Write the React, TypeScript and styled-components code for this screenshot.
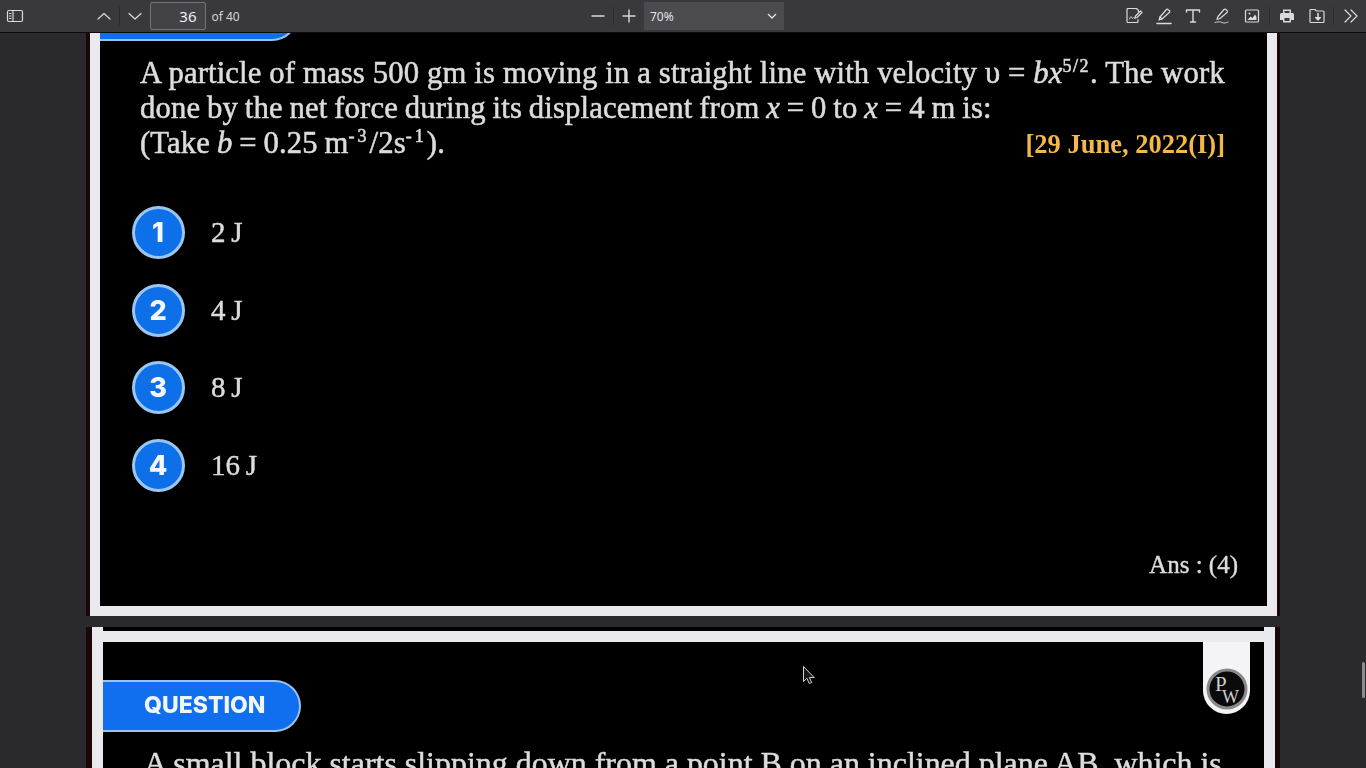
import type { ReactNode } from 'react';
import styled, { createGlobalStyle } from 'styled-components';

const OPTIONS = ['2 J', '4 J', '8 J', '16 J'];

const GlobalStyle = createGlobalStyle`
  html, body {
    margin: 0;
    height: 100%;
    overflow: hidden;
    background: #2a2a2e;
    font-family: 'Noto Sans', sans-serif;
  }
`;

const Wrapper = styled.div`
  position: relative;
  width: 1366px;
  height: 768px;
  overflow: hidden;
  display: flex;
  flex-direction: column;
`;

const Toolbar = styled.header`
  flex: none;
  height: 32px;
  background: #38383d;
  border-bottom: 1px solid #0c0c0d;
  display: flex;
  align-items: center;
  color: #d8d8da;
`;

const ToolGroup = styled.div<{ $width?: number }>`
  width: ${(p) => (p.$width ? `${p.$width}px` : 'auto')};
  flex: none;
  height: 100%;
  display: flex;
  align-items: center;
`;

const Spacer = styled.div`
  flex: 1;
`;

const IconSlot = styled.span<{ $width?: number }>`
  width: ${(p) => p.$width ?? 30}px;
  flex: none;
  height: 100%;
  display: flex;
  align-items: center;
  justify-content: center;
`;

const Separator = styled.span<{ $side?: number }>`
  flex: none;
  width: 1px;
  height: 18px;
  margin: 0 ${(p) => p.$side ?? 0}px;
  background: #2a2a2e;
`;

const PageInput = styled.div`
  box-sizing: border-box;
  width: 56px;
  height: 28px;
  padding-right: 8px;
  border: 1px solid #737378;
  border-radius: 2px;
  background: #424247;
  font-size: 15px;
  line-height: 26px;
  text-align: right;
  color: #f0f0f2;
`;

const PageCount = styled.span`
  margin-left: 6px;
  font-size: 12px;
  color: #d4d4d6;
`;

const ZoomSelect = styled.div`
  box-sizing: border-box;
  width: 140px;
  height: 28px;
  padding: 0 6px;
  background: #4a4a4f;
  display: flex;
  align-items: center;
  justify-content: space-between;
  font-size: 12px;
  color: #e4e4e6;
`;

const Viewer = styled.main`
  flex: 1;
  min-height: 0;
  overflow: hidden;
  display: flex;
  flex-direction: column;
  align-items: center;
  gap: 11px;
`;

const Page = styled.section<{ $left: number; $right: number; $height: number }>`
  flex: none;
  box-sizing: border-box;
  width: 1194px;
  height: ${(p) => p.$height}px;
  padding: 0 ${(p) => p.$right}px 0 ${(p) => p.$left}px;
  background: #1a0707;
`;

const Frame = styled.div<{ $side: number; $bottom: number }>`
  box-sizing: border-box;
  height: 100%;
  padding: 0 ${(p) => p.$side}px ${(p) => p.$bottom}px;
  background: #e9e9ee;
  display: flex;
  flex-direction: column;
`;

const TopGap = styled.div`
  flex: none;
  height: 4px;
  background: #000;
`;

const Panel = styled.div<{ $band?: boolean }>`
  position: relative;
  flex: 1;
  min-height: 0;
  overflow: hidden;
  background: #000;
  border-top: ${(p) => (p.$band ? '11px solid #e9e9ee' : 'none')};
  font-family: 'Liberation Serif', serif;
  color: #dcdcdc;
`;

const Soft = styled.div`
  filter: blur(0.7px);
`;

const Pill = styled.div<{ $top: number; $width: number }>`
  box-sizing: border-box;
  width: ${(p) => p.$width}px;
  height: 52px;
  margin-top: ${(p) => p.$top}px;
  padding-left: 41px;
  padding-bottom: 2px;
  background: #0f6fee;
  border: 2px solid #9cc2f0;
  border-left: none;
  border-radius: 0 26px 26px 0;
  display: flex;
  align-items: center;
  font-family: 'Inter', sans-serif;
  font-size: 23px;
  font-weight: 800;
  color: #f2f6fb;
`;

const Question = styled.div`
  padding: 15px 42px 0 40px;
  font-size: 30.7px;
  line-height: 35px;
  letter-spacing: 0.14px;
  -webkit-text-stroke: 0.55px #dcdcdc;
`;

const QuestionLine = styled.div<{ $tight?: boolean }>`
  display: flex;
  justify-content: space-between;
  white-space: nowrap;
  word-spacing: ${(p) => (p.$tight ? '-1px' : '0')};
`;

const Sup = styled.sup<{ $wide?: boolean }>`
  font-size: 18px;
  line-height: 0;
  letter-spacing: ${(p) => (p.$wide ? '3px' : '1.5px')};
`;

const DateTag = styled.span`
  margin-top: 1px;
  font-size: 26.5px;
  font-weight: 700;
  letter-spacing: 0;
  word-spacing: 0;
  color: #f2b84a;
  -webkit-text-stroke: 0;
`;

const OptionList = styled.div`
  margin-top: 44px;
  padding-left: 32px;
  display: flex;
  flex-direction: column;
  gap: 24.5px;
`;

const Option = styled.div`
  display: flex;
  align-items: center;
  gap: 26px;
  font-size: 29px;
  word-spacing: -1.5px;
  -webkit-text-stroke: 0.45px #dcdcdc;
`;

const OptionBadge = styled.span`
  box-sizing: border-box;
  width: 53px;
  height: 53px;
  padding-right: 1px;
  border-radius: 50%;
  border: 3px solid #9cc6f2;
  background: #0d70e8;
  display: flex;
  align-items: center;
  justify-content: center;
  font-family: 'Inter', sans-serif;
  font-size: 27px;
  font-weight: 800;
  color: #f4f7fb;
  -webkit-text-stroke: 0;
`;

const Answer = styled.div`
  margin-top: 59px;
  padding-right: 29px;
  text-align: right;
  font-size: 25px;
  -webkit-text-stroke: 0.4px #dcdcdc;
`;

const SecondQuestion = styled.div`
  margin-top: 14px;
  padding-left: 41px;
  white-space: nowrap;
  font-size: 31.95px;
  line-height: 35px;
  -webkit-text-stroke: 0.5px #dcdcdc;
`;

const LogoTab = styled.div`
  position: absolute;
  top: 0;
  right: 14px;
  width: 47px;
  height: 72px;
  background: #f4f4f6;
  border-radius: 0 0 24px 24px;
  display: flex;
  align-items: flex-end;
  justify-content: center;
  padding-bottom: 4px;
  box-sizing: border-box;
`;

const ScrollThumb = styled.div`
  position: absolute;
  top: 662px;
  right: 1px;
  width: 3px;
  height: 36px;
  border-radius: 2px;
  background: #8c8c90;
`;

const Cursor = styled.svg`
  position: absolute;
  left: 802px;
  top: 665px;
`;

const Glyph = ({ children }: { children: ReactNode }) => (
  <svg
    width={18}
    height={18}
    viewBox="0 0 18 18"
    fill="none"
    stroke="#dadadc"
    strokeWidth={1.2}
    strokeLinecap="round"
    strokeLinejoin="round"
  >
    {children}
  </svg>
);

function App() {
  return (
    <Wrapper>
      <GlobalStyle />
      <Toolbar>
        <ToolGroup $width={583}>
          <IconSlot>
            <Glyph>
              <rect x="1.5" y="3.5" width="15" height="11" rx="1.5" />
              <path d="M7 3.5v11M3.5 6.5h1.5M3.5 9h1.5M3.5 11.5h1.5" />
            </Glyph>
          </IconSlot>
          <IconSlot $width={58.5} />
          <IconSlot>
            <Glyph>
              <path d="M3 12l6-5.5 6 5.5" />
            </Glyph>
          </IconSlot>
          <Separator />
          <IconSlot>
            <Glyph>
              <path d="M3 6.5l6 5.5 6-5.5" />
            </Glyph>
          </IconSlot>
          <PageInput>36</PageInput>
          <PageCount>of 40</PageCount>
        </ToolGroup>
        <ToolGroup>
          <IconSlot>
            <Glyph>
              <path d="M3 9h12" strokeWidth={1.4} />
            </Glyph>
          </IconSlot>
          <Separator />
          <IconSlot>
            <Glyph>
              <path d="M3 9h12M9 3v12" strokeWidth={1.4} />
            </Glyph>
          </IconSlot>
          <ZoomSelect>
            70%
            <svg width="12" height="12" viewBox="0 0 12 12" fill="none" stroke="#e4e4e6" strokeWidth="1.3">
              <path d="M2 4l4 4 4-4" />
            </svg>
          </ZoomSelect>
        </ToolGroup>
        <Spacer />
        <ToolGroup>
          <IconSlot>
            <Glyph>
              <path d="M13.5 5V3.5l-2-2H3a1 1 0 0 0-1 1v12a1 1 0 0 0 1 1h9a1 1 0 0 0 1-1v-2" />
              <path d="M4.5 12c1-2.500 1.500-3 2-2s.5 2 1.500 1 1 .5 2 .5" strokeWidth={0.9} />
              <path d="M10 11l.5-2 5-5 1.500 1.500-5 5z" />
            </Glyph>
          </IconSlot>
          <IconSlot $width={30}>
            <Glyph>
              <path d="M2 16.500h14" strokeWidth={1.6} />
              <path d="M4 13l1-3 6.500-7.500a1 1 0 0 1 1.500 0l1.500 1.300a1 1 0 0 1 0 1.500L7 12z" />
              <path d="M5 10l2 2" />
            </Glyph>
          </IconSlot>
          <IconSlot $width={28}>
            <Glyph>
              <path d="M2.500 5V3h13v2M9 3v12M6.500 15h5" strokeWidth={1.4} />
            </Glyph>
          </IconSlot>
          <IconSlot>
            <Glyph>
              <path d="M4 12.500l1-3 6-7a1.300 1.300 0 0 1 2 0l1 1a1.300 1.300 0 0 1 0 2l-7 6z" />
              <path d="M2 15.500c3-1 5-1 7 0s4 .5 6-.5" strokeWidth={0.9} />
            </Glyph>
          </IconSlot>
          <IconSlot>
            <Glyph>
              <rect x="2.500" y="3" width="13" height="12" rx="1" />
              <path d="M4.500 13l3-3.500 2 1.500 2.500-3.500 1.500 2.500V13z" fill="#dadadc" stroke="none" />
              <circle cx="6.500" cy="6.500" r="1" fill="#dadadc" stroke="none" />
            </Glyph>
          </IconSlot>
          <Separator $side={2} />
          <IconSlot>
            <Glyph>
              <path
                d="M5 2.500h8V6h1.500A1.500 1.500 0 0 1 16 7.500V13h-3v2.500H5V13H2V7.500A1.500 1.500 0 0 1 3.500 6H5z"
                fill="#dadadc"
                stroke="none"
              />
              <path d="M6.500 11h5v3h-5zM6.500 4h5v2h-5z" fill="#38383d" stroke="none" />
            </Glyph>
          </IconSlot>
          <IconSlot $width={29}>
            <Glyph>
              <path d="M7 2.500H3a1 1 0 0 0-1 1v11a1 1 0 0 0 1 1h12a1 1 0 0 0 1-1V5a1 1 0 0 0-1-1H8.500z" />
              <path d="M10 6.500v5.500" strokeWidth={1.6} />
              <path d="M7.500 10.500L10 13l2.500-2.500z" fill="#dadadc" />
            </Glyph>
          </IconSlot>
          <Separator $side={2} />
          <IconSlot>
            <Glyph>
              <path d="M3 3l6 6-6 6M9 3l6 6-6 6" />
            </Glyph>
          </IconSlot>
        </ToolGroup>
      </Toolbar>
      <Viewer>
        <Page $left={4} $right={3} $height={583}>
          <Frame $side={10} $bottom={10}>
            <Panel>
              <Soft>
                <Pill $top={-44} $width={198} />
                <Question>
                  <QuestionLine>
                    <span>
                      A particle of mass 500 gm is moving in a straight line with velocity υ = <i>bx</i>
                      <Sup>5/2</Sup>. The work
                    </span>
                  </QuestionLine>
                  <QuestionLine $tight>
                    <span>
                      done by the net force during its displacement from <i>x</i> = 0 to <i>x</i> = 4 m is:
                    </span>
                  </QuestionLine>
                  <QuestionLine $tight>
                    <span>
                      (Take <i>b</i> = 0.25 m<Sup $wide>-3</Sup>/2s<Sup $wide>-1</Sup>).
                    </span>
                    <DateTag>[29 June, 2022(I)]</DateTag>
                  </QuestionLine>
                </Question>
                <OptionList>
                  {OPTIONS.map((text, i) => (
                    <Option key={text}>
                      <OptionBadge>{i + 1}</OptionBadge>
                      {text}
                    </Option>
                  ))}
                </OptionList>
                <Answer>Ans : (4)</Answer>
              </Soft>
            </Panel>
          </Frame>
        </Page>
        <Page $left={6} $right={5} $height={200}>
          <Frame $side={11} $bottom={0}>
            <TopGap />
            <Panel $band>
              <Soft>
                <Pill $top={38} $width={198}>
                  QUESTION
                </Pill>
                <SecondQuestion>
                  A small block starts slipping down from a point B on an inclined plane AB, which is
                </SecondQuestion>
              </Soft>
              <LogoTab>
                <svg width="42" height="42" viewBox="0 0 42 42">
                  <circle cx="21" cy="21" r="19" fill="#0a0a0a" stroke="#8a8a8a" strokeWidth="3" />
                  <text x="9" y="23" fontFamily="Liberation Serif" fontSize="21" fill="#cfcfcf">
                    P
                  </text>
                  <text x="16" y="35" fontFamily="Liberation Serif" fontSize="18" fill="#cfcfcf">
                    W
                  </text>
                </svg>
              </LogoTab>
            </Panel>
          </Frame>
        </Page>
      </Viewer>
      <ScrollThumb />
      <Cursor width="14" height="21" viewBox="0 0 14 21">
        <path
          d="M1.500 1.500v15l3.400-3.200 2.300 5.200 2.500-1-2.300-5h4.800z"
          fill="#1a1a1a"
          stroke="#d0d0d0"
          strokeWidth="1"
        />
      </Cursor>
    </Wrapper>
  );
}

export default App;
